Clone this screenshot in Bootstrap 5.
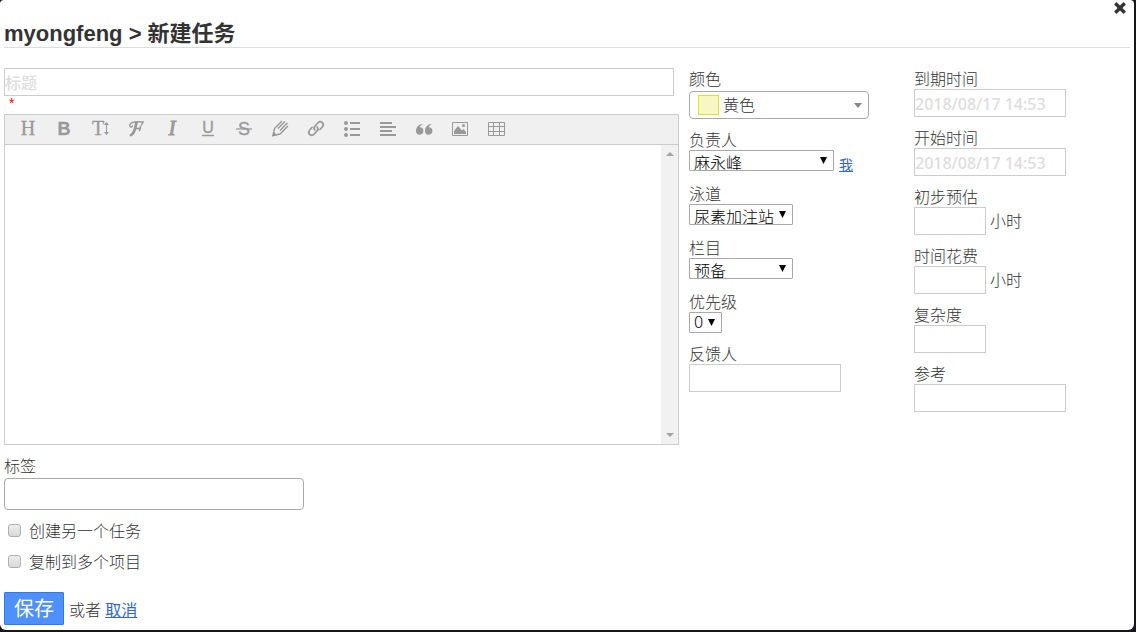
<!DOCTYPE html>
<html lang="zh-CN">
<head>
<meta charset="utf-8">
<meta name="viewport" content="width=device-width, initial-scale=1">
<title>新建任务</title>
<link href="https://cdn.jsdelivr.net/npm/bootstrap@5.3.0/dist/css/bootstrap.min.css" rel="stylesheet">
<style>
  body { background: #17171a; color: #333; font: 300 16px/20px "Noto Sans", "Noto Sans CJK SC", sans-serif; }
  a { color: #36c; font-weight: 400; }
  .task-dialog { background: #fff; border-radius: 4px 4px 6px 6px; margin: 0 2px 2px 0; padding: 0 4px 5px; min-height: 630px; }
  .dialog-close { width: 12px; height: 12px; top: 2px; right: 8px; }
  .dialog-title { font: 700 22px/26px "Liberation Sans", "Noto Sans CJK SC", sans-serif; color: #333; border-bottom: 1px solid #ddd; padding-top: 21px; margin-bottom: 20px; }
  .main-col { min-width: 0; margin-right: 10px; }
  .side-col { width: 225px; padding-top: 1px; }
  .date-col { width: 216px; padding-top: 1px; }
  .line-input { display: block; height: 28px; border: 1px solid #ccc; padding: 2px 0 0; background: #fff; font-weight: 400; border-radius: 0; }
  .line-input::placeholder { color: #ddd; opacity: 1; font-weight: 500; }
  .w-title { width: calc(100% - 5px); }
  .w-text { width: 152px; }
  .w-number { width: 72px; }
  .required-mark { color: #f00; font: 400 14px/14px "Liberation Sans", sans-serif; padding-left: 5px; height: 18px; }
  .field { margin-bottom: 11px; }
  .field-select { margin-bottom: 13px; }
  .field label, .field-select label { display: block; }
  .plain-select { appearance: none; height: 21px; border: 1px solid #a9a9a9; border-radius: 1px; color: #000; font-weight: 300; line-height: 20px; padding: 2px 14px 0 4px; background: #fff url("data:image/svg+xml,%3Csvg xmlns='http://www.w3.org/2000/svg' width='8' height='7'%3E%3Cpath d='M0 0h7L3.500 7z'/%3E%3C/svg%3E") no-repeat right 5px top 6px; }
  .w-owner { width: 145px; }
  .w-lane { width: 104px; }
  .w-priority { width: 33px; padding-top: 0; line-height: 19px; }
  .owner-row { height: 21px; gap: 5px; }
  .owner-me { font-size: 14px; padding-top: 5px; }
  .color-select { width: 180px; height: 28px; border: 1px solid #aaa; border-radius: 4px; background: #fff; color: #333; padding: 0 6px 0 8px; margin-top: 2px; font-weight: 300; }
  .swatch { width: 21px; height: 20px; background: #f5f7c4; border: 1px solid #dfe32d; margin-right: 4px; }
  .editor { border: 1px solid #ccc; }
  .editor-bar { background: #f0f0f0; border-bottom: 1px solid #ccc; height: 30px; padding-left: 5px; overflow: hidden; }
  .tool { width: 36px; height: 26px; border: 0; background: none; padding: 0; color: #999; }
  .tool svg { display: block; margin: 0 auto; overflow: visible; }
  .tool text { fill: #999; text-anchor: middle; }
  .serif { font: 20px "Liberation Serif", serif; stroke: #999; stroke-width: .3px; }
  .sans { font: 18px "Liberation Sans", sans-serif; stroke: #999; stroke-width: .3px; }
  .sans-low { font-size: 16px; }
  .heavy { font-weight: 700; }
  .slanted { font-style: italic; stroke-width: 1px; }
  .editor-text { height: 299px; border: 0; resize: none; outline: 0; overflow: hidden; min-width: 0; }
  .scroll-track { width: 17px; background: #f1f1f1; padding: 7px 0; }
  .tag-input { width: 300px; max-width: 100%; height: 32px; border: 1px solid #aaa; border-radius: 4px; margin-top: 2px; display: block; }
  .tag-field { margin-top: 11px; }
  .tick-row { height: 20px; margin-top: 11px; gap: 8px; padding-left: 4px; }
  .tick-row input { appearance: none; width: 13px; height: 13px; margin: 0 0 2px; border: 1px solid #b0b0b0; border-radius: 3px; background: linear-gradient(#eee, #d8d8d8); }
  .save-btn { height: 33px; width: 60px; background: #4d90fe; border: 1px solid #3079ed; border-radius: 1px; color: #fff; font-size: 20px; font-weight: 400; padding: 0; }
  .form-end { margin-top: 20px; gap: 5px; }
  .form-end > span { padding-top: 2px; }
</style>
</head>
<body>
<main class="task-dialog position-relative">
  <button class="btn p-0 border-0 position-absolute dialog-close d-flex" type="button" aria-label="关闭">
    <svg width="12" height="12" viewBox="0 0 12 12"><path d="M2.500 2.500L9.500 9.500M9.500 2.500L2.500 9.500" stroke="#333" stroke-width="3.400" stroke-linecap="square"/></svg>
  </button>
  <h1 class="dialog-title">myongfeng &gt; 新建任务</h1>
  <form>
    <div class="d-flex">
      <div class="main-col flex-grow-1">
        <input class="line-input w-title" type="text" placeholder="标题" aria-label="标题">
        <div class="required-mark">*</div>
        <div class="editor">
          <div class="editor-bar d-flex">
            <button class="tool" type="button" aria-label="标题级别"><svg width="20" height="20"><text class="serif" x="10" y="17">H</text></svg></button>
            <button class="tool" type="button" aria-label="粗体"><svg width="20" height="20"><text class="sans heavy" x="10" y="17">B</text></svg></button>
            <button class="tool" type="button" aria-label="字号"><svg width="20" height="20"><text class="serif" x="8" y="17">T</text><path d="M16.500 6v9" stroke="#999"/><path d="M14 7l2.500-3L19 7zM14 14l2.500 3 2.500-3z" fill="#999"/></svg></button>
            <button class="tool" type="button" aria-label="字体"><svg width="20" height="20" fill="none" stroke="#999" stroke-linecap="round"><path d="M17 4C12 3.500 5.500 3.500 4 6.500 3 9 5.500 10 6.500 8" stroke-width="1.500"/><path d="M10.500 4.500C9.500 9 9 15.500 5 17" stroke-width="2.800"/><path d="M17 4L15.500 7M8.500 10.500h6M14.500 8.500L13.500 12.500" stroke-width="1.500"/></svg></button>
            <button class="tool" type="button" aria-label="斜体"><svg width="20" height="20"><text class="serif slanted" x="10" y="17">I</text></svg></button>
            <button class="tool" type="button" aria-label="下划线"><svg width="20" height="20"><text class="sans sans-low" x="10" y="15">U</text><path d="M4 17.500h12" stroke="#999" stroke-width="1.500"/></svg></button>
            <button class="tool" type="button" aria-label="删除线"><svg width="20" height="20"><text class="sans" x="10" y="17">S</text><path d="M2 11h16" stroke="#999" stroke-width="1.300"/></svg></button>
            <button class="tool" type="button" aria-label="文字颜色"><svg width="20" height="20" fill="none" stroke="#999" stroke-width="1.400"><path d="M12 3L4.500 10.500 3 17.500 10 16 18 8M15 3.500L8 10.500M17.500 5L10 12.500"/><path d="M2 18.500l1.500-5 3.500 3.500z" fill="#999" stroke="none"/></svg></button>
            <button class="tool" type="button" aria-label="链接"><svg width="20" height="20" fill="none" stroke="#999" stroke-width="1.700" stroke-linecap="round"><path d="M9 12C7.500 10.500 8 9 9 8L12 4.800C14.500 2 19 5.500 16.500 8.700L14 11.500M11 9C12.500 10.500 12 12 11 13L8 16.200C5.500 19 1 15.500 3.500 12.300L6 9.500"/></svg></button>
            <button class="tool" type="button" aria-label="列表"><svg width="20" height="20" stroke="#999" stroke-width="2"><path d="M8 5h10M8 11h10M8 17h10"/><g fill="#999" stroke="none"><circle cx="4" cy="5" r="2"/><circle cx="4" cy="11" r="2"/><circle cx="4" cy="17" r="2"/></g></svg></button>
            <button class="tool" type="button" aria-label="对齐"><svg width="20" height="20" stroke="#999" stroke-width="2"><path d="M2 5h12M2 9h16M2 13h12M2 17h16"/></svg></button>
            <button class="tool" type="button" aria-label="引用"><svg width="20" height="20" fill="#999"><path d="M8.500 6C5 6.200 2 9 2 13a3.700 3.700 0 1 0 3.500-3.700C6 8 7 7 8.500 6.500z"/><path d="M17.500 6C14 6.200 11 9 11 13a3.700 3.700 0 1 0 3.500-3.700C15 8 16 7 17.500 6.500z"/></svg></button>
            <button class="tool" type="button" aria-label="图片"><svg width="20" height="20" fill="#999"><path d="M2.500 4.500h15v13h-15z" fill="none" stroke="#999"/><path d="M4 16v-3l4-5 4 4.500 1.500-1.500L16 14v2z"/><circle cx="13.500" cy="7.500" r="1.500"/></svg></button>
            <button class="tool" type="button" aria-label="表格"><svg width="20" height="20" fill="none" stroke="#999"><path d="M2.500 4.500h16v13h-16zM2.500 8.500h16M2.500 13.500h16M7.500 4.500v13M13.500 4.500v13"/></svg></button>
          </div>
          <div class="d-flex">
            <textarea class="editor-text flex-grow-1" aria-label="描述"></textarea>
            <div class="scroll-track d-flex flex-column justify-content-between align-items-center">
              <svg width="8" height="4"><path d="M0 4l4-4 4 4z" fill="#a3a3a3"/></svg>
              <svg width="8" height="4"><path d="M0 0l4 4 4-4z" fill="#a3a3a3"/></svg>
            </div>
          </div>
        </div>
      </div>
      <div class="side-col flex-shrink-0">
        <div class="field">
          <label for="color">颜色</label>
          <button class="color-select d-flex align-items-center" id="color" type="button"><span class="swatch"></span><span>黄色</span><svg class="ms-auto" width="8" height="5"><path d="M0 0h8L4 5z" fill="#888"/></svg></button>
        </div>
        <div class="field-select">
          <label for="owner">负责人</label>
          <div class="owner-row d-flex"><select class="plain-select w-owner" id="owner"><option>麻永峰</option></select><a class="owner-me" href="#">我</a></div>
        </div>
        <div class="field-select">
          <label for="lane">泳道</label>
          <select class="plain-select w-lane d-block" id="lane"><option>尿素加注站</option></select>
        </div>
        <div class="field-select">
          <label for="column">栏目</label>
          <select class="plain-select w-lane d-block" id="column"><option>预备</option></select>
        </div>
        <div class="field">
          <label for="priority">优先级</label>
          <select class="plain-select w-priority d-block" id="priority"><option>0</option></select>
        </div>
        <div class="field">
          <label for="reporter">反馈人</label>
          <input class="line-input w-text" id="reporter" type="text">
        </div>
      </div>
      <div class="date-col flex-shrink-0">
        <div class="field"><label for="due">到期时间</label><input class="line-input w-text" id="due" type="text" placeholder="2018/08/17 14:53"></div>
        <div class="field"><label for="start">开始时间</label><input class="line-input w-text" id="start" type="text" placeholder="2018/08/17 14:53"></div>
        <div class="field"><label for="estimate">初步预估</label><div class="d-flex align-items-center gap-1"><input class="line-input w-number" id="estimate" type="text"><span>小时</span></div></div>
        <div class="field"><label for="spent">时间花费</label><div class="d-flex align-items-center gap-1"><input class="line-input w-number" id="spent" type="text"><span>小时</span></div></div>
        <div class="field"><label for="score">复杂度</label><input class="line-input w-number" id="score" type="text"></div>
        <div class="field"><label for="reference">参考</label><input class="line-input w-text" id="reference" type="text"></div>
      </div>
    </div>
    <div class="tag-field">
      <label class="d-block" for="tags">标签</label>
      <input class="tag-input" id="tags" type="text">
    </div>
    <div class="tick-row d-flex align-items-center"><input id="another" type="checkbox"><label for="another">创建另一个任务</label></div>
    <div class="tick-row d-flex align-items-center"><input id="duplicate" type="checkbox"><label for="duplicate">复制到多个项目</label></div>
    <div class="form-end d-flex align-items-center"><button class="save-btn" type="submit">保存</button><span>或者 <a href="#">取消</a></span></div>
  </form>
</main>
<script src="https://cdn.jsdelivr.net/npm/bootstrap@5.3.0/dist/js/bootstrap.bundle.min.js"></script>
</body>
</html>
